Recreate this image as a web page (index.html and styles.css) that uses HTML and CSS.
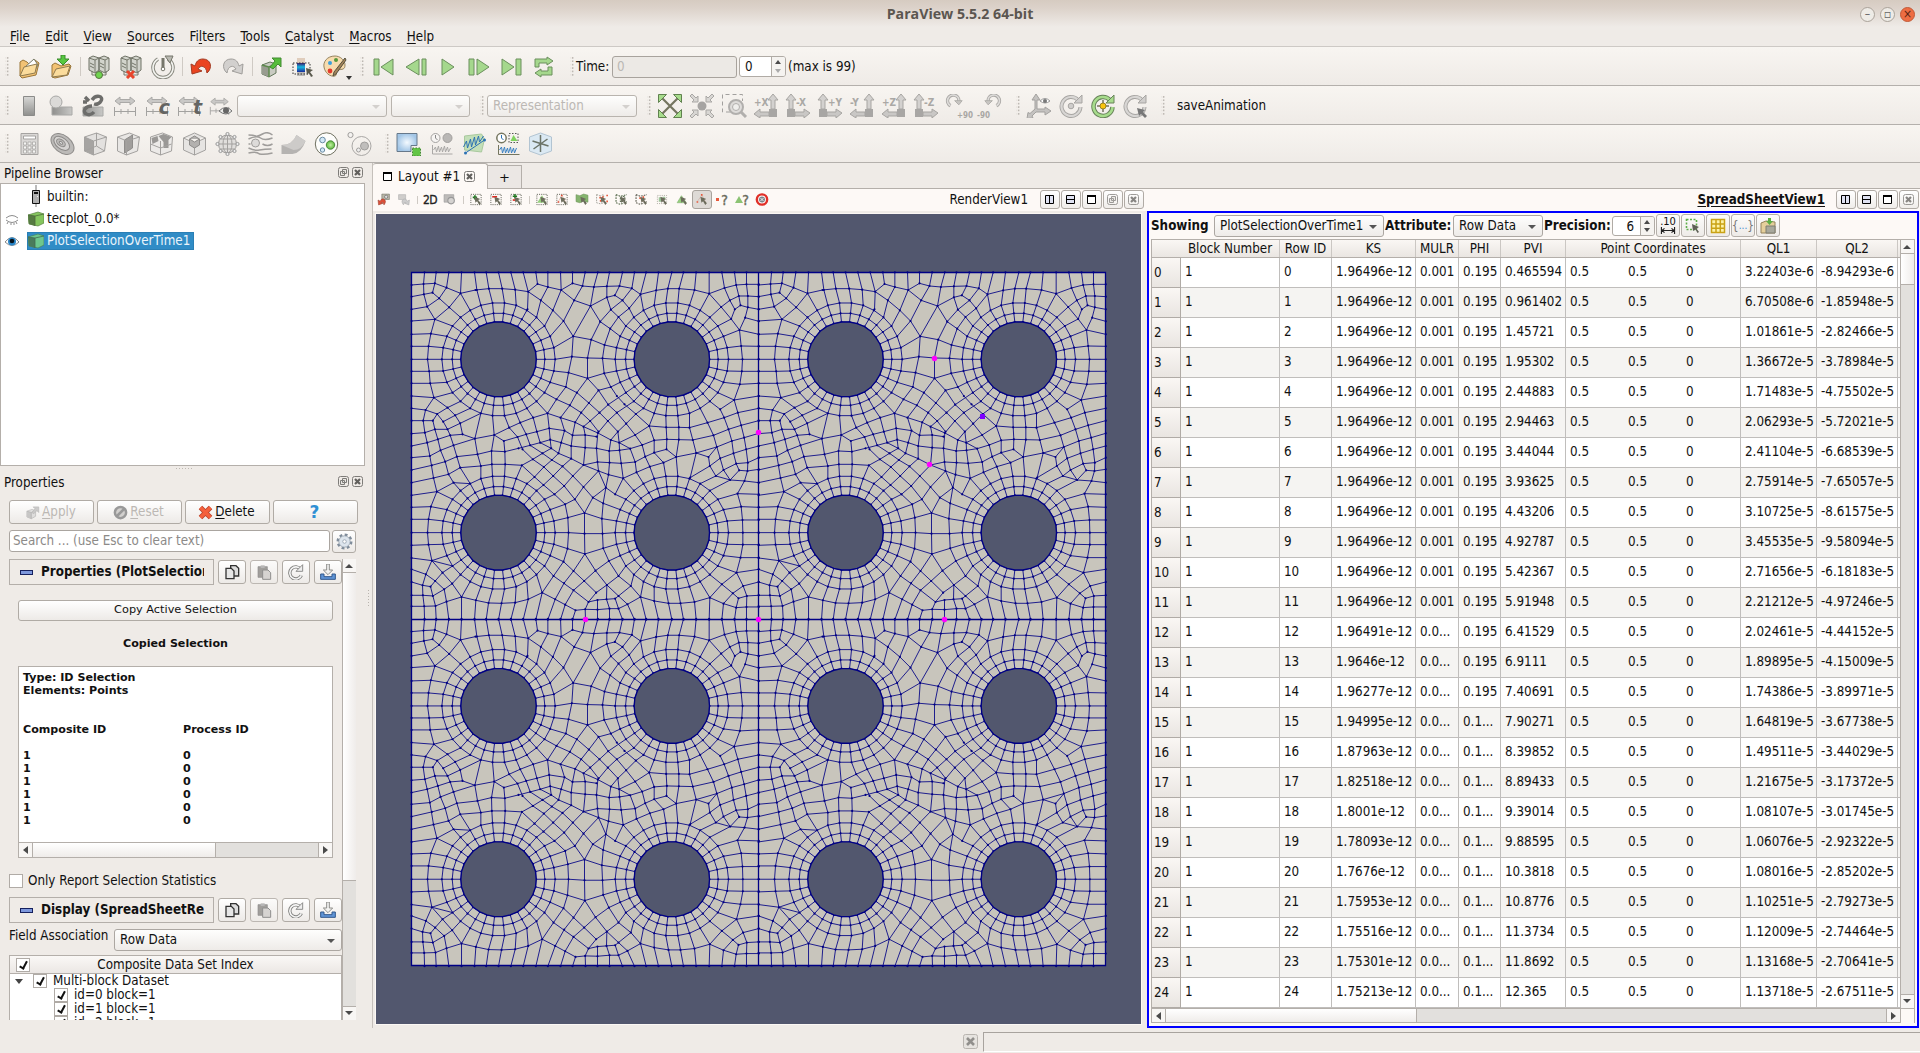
FILE: index.html
```html
<!DOCTYPE html>
<html lang="en">
<head>
<meta charset="utf-8">
<title>ParaView 5.5.2 64-bit</title>
<link rel="stylesheet" href="styles.css">
</head>
<body>
<svg class="sheet" width="0" height="0">
<defs>
<linearGradient id="gr" x1="0" y1="0" x2="0" y2="1"><stop offset="0" stop-color="#d8d8d6"/><stop offset="1" stop-color="#8f8f8d"/></linearGradient>
<linearGradient id="grh" x1="0" y1="0" x2="1" y2="0"><stop offset="0" stop-color="#8f8f8d"/><stop offset="1" stop-color="#c8c8c6"/></linearGradient>
<linearGradient id="rb" x1="0" y1="0" x2="0" y2="1"><stop offset="0" stop-color="#3a1a70"/><stop offset=".45" stop-color="#16b8e0"/><stop offset="1" stop-color="#1a2a9a"/></linearGradient>
<radialGradient id="bl"><stop offset="0" stop-color="#f4faff"/><stop offset="1" stop-color="#a3c6e6"/></radialGradient>
<radialGradient id="gn"><stop offset="0" stop-color="#c4f0a4"/><stop offset="1" stop-color="#5cb83c"/></radialGradient>
</defs>
<symbol id="open" viewBox="0 0 24 24"><path d="M3 21V7l3-2 4 2 2 2 6-4 4 3-3 12-14 3z" fill="#f2c274" stroke="#9a7638"/><path d="M8 12l9-8 4 6-3 5z" fill="#fff" stroke="#777a66"/><path d="M3 21l4-9 13-3-2 9z" fill="#fbdc9c" stroke="#8f7b50"/></symbol>
<symbol id="openr" viewBox="0 0 24 24"><path d="M3 22V10l3-2 4 2 2 1 8-2 2 2-3 9-13 3z" fill="#f2c274" stroke="#9a7638"/><path d="M3 22l4-8 14-3-3 9z" fill="#fbdc9c" stroke="#8f7b50"/><path d="M12 0h4v4h4l-6 6-6-6h4z" fill="#57c840" stroke="#3a8a2c"/></symbol>
<symbol id="server" viewBox="0 0 24 24"><path d="M2 3l4-2 6 2v12l-4 3-6-3zM12 3l5-2 5 2v12l-4 3-6-3z" fill="#d2d4cc" stroke="#6f7266"/><path d="M2 3l6 2 4-2M8 5v12M12 3l6 2 4-2M18 5v12M3 8l4 2M3 11l4 2M13 8l4 2M13 11l4 2M5 16v4h14v-4" fill="none" stroke="#74776a"/></symbol>
<symbol id="connect" viewBox="0 0 24 24"><use href="#server"/><circle cx="12" cy="20" r="3.5" fill="#6fd44f" stroke="#55713f"/></symbol>
<symbol id="disconnect" viewBox="0 0 24 24"><use href="#server"/><path d="M8 16l7 7m0-7l-7 7" stroke="#e8452c" stroke-width="3"/></symbol>
<symbol id="timer" viewBox="0 0 24 24"><path d="M17 4A10 10 0 1 1 7 4" fill="none" stroke="#8a8a80" stroke-width="3.6"/><path d="M17 4A10 10 0 1 1 7 4" fill="none" stroke="#f4f4f0" stroke-width="1.6"/><path d="M14 1h8l-3 7z" fill="#b9b9b1" stroke="#77776c"/><path d="M12 3v11" stroke="#77776c" stroke-width="3"/><circle cx="12" cy="14" r="1.8" fill="#fff" stroke="#77776c"/></symbol>
<symbol id="undo" viewBox="0 0 24 24"><path d="M2 9l1 10 10-3-4-2c2-4 8-4 9 4 6-5 4-14-4-14-5 0-7 3-8 7z" fill="#ea4420" stroke="#a33a22"/></symbol>
<symbol id="redo" viewBox="0 0 24 24"><path d="M22 9l-1 10-10-3 4-2C13 10 7 10 6 18 0 13 2 4 10 4c5 0 7 3 8 7z" fill="#d2d0ce" stroke="#a09e9b"/></symbol>
<symbol id="extract" viewBox="0 0 24 24"><path d="M3 10l8-3 6 2v9l-7 4-7-3z" fill="#c9cbc2" stroke="#62765a"/><path d="M3 10l7 2v10l-7-3z" fill="#989c90"/><path d="M3 10l7 2v10M10 12l7-3" fill="none" stroke="#5d8a4c" stroke-width="1.500"/><path d="M11 12l5-6-3-3h9v9l-3-3-5 5z" fill="#56bd3b" stroke="#438a33"/></symbol>
<symbol id="colors" viewBox="0 0 24 24"><path d="M6 3h8v5H6z" fill="#e0cdbc"/><path d="M6 8h8v9H6z" fill="url(#rb)"/><path d="M6 17h8v4H6z" fill="#bab8b5"/><path d="M2 8h17v11H2z" fill="none" stroke="#333" stroke-dasharray="1.5 1.5"/><path d="M15 13l7 2-3 2 3 4-2 1-2-4-2 2z" fill="#58584c"/></symbol>
<symbol id="palette" viewBox="0 0 24 24"><path d="M12 1C4 1 0 7 1 12c1 6 6 10 11 9 3-1 0-5 3-6 4-1 7 0 7-5 0-5-5-9-10-9z" fill="#f7dcae" stroke="#95835f"/><circle cx="7" cy="8" r="2" fill="#3ba0dc"/><circle cx="13" cy="5" r="2" fill="#56993c"/><circle cx="7" cy="16" r="2.4" fill="#e23a2c"/><path d="M22 3L11 17l-1 4 3-2L23 5z" fill="#a4855b" stroke="#55503e"/></symbol>
<symbol id="first" viewBox="0 0 24 24"><path d="M2 4h5v16H2zM21 4v16L9 12z" fill="#a5d88d" stroke="#6a8f5c"/></symbol>
<symbol id="prev" viewBox="0 0 24 24"><path d="M18 4h4v16h-4zM15 4v16L2 12z" fill="#a5d88d" stroke="#6a8f5c"/></symbol>
<symbol id="play" viewBox="0 0 24 24"><path d="M6 4l12 8-12 8z" fill="#a5d88d" stroke="#6a8f5c"/></symbol>
<symbol id="next" viewBox="0 0 24 24"><path d="M1 4h5v16H1zM9 4v16l12-8z" fill="#a5d88d" stroke="#6a8f5c"/></symbol>
<symbol id="last" viewBox="0 0 24 24"><path d="M16 4h5v16h-5zM2 4v16l12-8z" fill="#a5d88d" stroke="#6a8f5c"/></symbol>
<symbol id="loop" viewBox="0 0 24 24"><path d="M3 12V4h12V2l6 4-6 4V8H7v4zM20 12v8H9v2l-6-4 6-4v2h7v-4z" fill="#a5d88d" stroke="#6a8f5c"/></symbol>
<symbol id="bar" viewBox="0 0 24 24"><path d="M6.500 2.500h11v19h-11z" fill="url(#gr)" stroke="#8b8b89"/></symbol>
<symbol id="shapes" viewBox="0 0 24 24"><path d="M3 13h20v8H3z" fill="url(#grh)" stroke="#a8a8a6"/><circle cx="7" cy="8" r="6" fill="#dbdad8" stroke="#a8a8a6"/></symbol>
<symbol id="link" viewBox="0 0 24 24"><path d="M2 13h20v9H2z" fill="url(#grh)" stroke="#a8a8a6"/><g fill="none" stroke="#6d6d6b" stroke-width="3.400"><path d="M11 6c4-6 12-4 9 1-1 2-4 4-7 3M13 18c-4 5-12 2-9-3 2-3 5-3 7-3M4 3l4 4M2 8h4"/></g></symbol>
<symbol id="range" viewBox="0 0 24 24"><path d="M2 7l5-4v2.500h10V3l5 4-5 4V8.500H7V11z" fill="#c9c8c6" stroke="#aaa9a7"/><path d="M1.500 13v9M22.500 13v9M1.500 17.500h21M8 15v5M15 15v5" stroke="#a3a2a0"/></symbol>
<symbol id="arrow" viewBox="0 0 24 24"><path d="M9 7l11 4-4 2 5 6-3 3-4-7-3 3z" fill="#6c6c5c"/></symbol>
<symbol id="eyeg" viewBox="0 0 24 24"><path d="M10 17q7-7 13 0-6 6-13 0z" fill="#ececea" stroke="#767676"/><circle cx="17" cy="16.500" r="3" fill="#666"/></symbol>
<symbol id="reset" viewBox="0 0 24 24"><path d="M4 4l16 16M20 4L4 20" stroke="#74745f" stroke-width="2.200"/><g fill="#a7dc8c" stroke="#60814f"><path d="M.5.5h8l-8 8zM23.500.5v8l-8-8zM.5 23.500v-8l8 8zM23.500 23.500h-8l8-8z"/></g></symbol>
<symbol id="zoomto" viewBox="0 0 24 24"><g fill="#d8d6d3" stroke="#aaa8a5"><path d="M8 8H2l2-2-4-4 2-2 4 4 2-2zM16 8V2l2 2 4-4 2 2-4 4 2 2zM8 16v6l-2-2-4 4-2-2 4-4-2-2zM16 16h6l-2 2 4 4-2 2-4-4-2 2z"/></g><circle cx="12" cy="12" r="4.500" fill="#a6a4a2"/></symbol>
<symbol id="zoombox" viewBox="0 0 24 24"><path d="M8 18H.5V.5h20V7" fill="none" stroke="#a2a09e" stroke-dasharray="4 3"/><circle cx="14" cy="13" r="7" fill="#dedcda" stroke="#b1afad" stroke-width="2"/><circle cx="14" cy="13" r="3.500" fill="#efeeec" stroke="#b1afad"/><path d="M19 18l5 5" stroke="#b1afad" stroke-width="3"/></symbol>
<symbol id="axL" viewBox="0 0 24 24"><path d="M17 15V6h-3l5-6 5 6h-3v9z" fill="#d3d1cf" stroke="#a7a5a2"/><path d="M15 22H6v2l-6-4 6-5v3h9z" fill="#c9c7c5" stroke="#a7a5a2"/><path d="M15 15h8v8h-8z" fill="#a8a6a4"/></symbol>
<symbol id="axR" viewBox="0 0 24 24"><path d="M3 15V6H0l5-6 5 6H7v9z" fill="#d3d1cf" stroke="#a7a5a2"/><path d="M9 22h9v2l6-5-6-4v3H9z" fill="#c9c7c5" stroke="#a7a5a2"/><path d="M1 15h8v8H1z" fill="#a8a6a4"/></symbol>
<symbol id="rot" viewBox="0 0 24 24"><path d="M6 14A6.800 6.800 0 1 1 16 9" fill="none" stroke="#a9a7a4" stroke-width="4"/><path d="M6 14A6.800 6.800 0 1 1 16 9" fill="none" stroke="#dddbd9" stroke-width="2"/><path d="M11 8h9l-4 5z" fill="#c8c6c3" stroke="#a9a7a4"/></symbol>
<symbol id="axes" viewBox="0 0 24 24"><path d="M8 15V6H5l4-6 4 6h-3v9l8 0v-2l6 4-6 4v-3H9l-4 4 1 2-6 .5 1-6 2 1z" fill="#c4c2c0" stroke="#a3a19f"/><path d="M13 7q5-5 10 0-5 4-10 0z" fill="#fff" stroke="#999"/><circle cx="18" cy="7" r="2" fill="#777"/></symbol>
<symbol id="circ" viewBox="0 0 24 24"><path d="M19 6A9.500 9.500 0 1 0 21.500 13" fill="none" stroke="#a7a5a2" stroke-width="4"/><path d="M19 6A9.500 9.500 0 1 0 21.500 13" fill="none" stroke="#d8d6d4" stroke-width="2.200"/><path d="M23 1v8h-8z" fill="#d0cecc" stroke="#a7a5a2"/></symbol>
<symbol id="circd" viewBox="0 0 24 24"><use href="#circ"/><circle cx="12" cy="12" r="2.800" fill="#cfcdcb" stroke="#a7a5a2"/></symbol>
<symbol id="circg" viewBox="0 0 24 24"><path d="M19 6A9.500 9.500 0 1 0 21.500 13" fill="none" stroke="#68835a" stroke-width="4.500"/><path d="M19 6A9.500 9.500 0 1 0 21.500 13" fill="none" stroke="#a7dc8c" stroke-width="2.600"/><path d="M23 1v8h-8z" fill="#a7dc8c" stroke="#68835a"/><path d="M12 6v12M6 12h12" stroke="#74745f" stroke-width="1.500"/><circle cx="12" cy="12" r="3" fill="#fac40e" stroke="#9a8424"/></symbol>
<symbol id="circa" viewBox="0 0 24 24"><use href="#circ"/><path d="M14 14l8 2-2 2 4 4-2 2-4-4-2 2z" fill="#777"/></symbol>
<symbol id="calc" viewBox="0 0 24 24"><path d="M3.500 1.500h17v21h-17z" fill="#dad8d6" stroke="#a5a3a1"/><path d="M6 4h12v3H6z" fill="#fff" stroke="#a5a3a1"/><path d="M6 10h3v3H6zM10.500 10h3v3h-3zM15 10h3v3h-3zM6 14h3v3H6zM10.500 14h3v3h-3zM15 14h3v3h-3zM6 18h3v3H6zM10.500 18h3v3h-3zM15 18h3v3h-3z" fill="#f5f5f3" stroke="#aaa8a6" stroke-width=".8"/></symbol>
<symbol id="contour" viewBox="0 0 24 24"><g fill="#bcbab8" stroke="#8c8a88" transform="rotate(38 12 12)"><ellipse cx="12" cy="12" rx="13" ry="8.500"/><ellipse cx="11" cy="12" rx="9" ry="5.500" fill="#d6d4d2"/><ellipse cx="10" cy="12" rx="5" ry="3"/><ellipse cx="10" cy="12" rx="2" ry="1" fill="#eee"/></g></symbol>
<symbol id="cubeg" viewBox="0 0 24 24"><path d="M1 5l12-4 10 4-2 14-11 4-9-4z" fill="#e3e1df" stroke="#a3a19f"/><path d="M1 5l9 4v14l-9-4z" fill="#a6a4a2"/><path d="M1 5l9 4 13-4M10 9v14M13 1v13M13 14L1 19M13 14l8 5" fill="none" stroke="#a3a19f"/></symbol>
<symbol id="slice" viewBox="0 0 24 24"><path d="M1 5l12-4 10 4-2 14-11 4-9-4z" fill="#e8e6e4" stroke="#a3a19f"/><path d="M8 8l8-5v13l-8 5z" fill="#a09e9c" stroke="#8f8d8b"/><path d="M1 5l9 4 13-4M10 9v14" fill="none" stroke="#a3a19f"/></symbol>
<symbol id="thresh" viewBox="0 0 24 24"><path d="M1 5l12-4 10 4-1 14-11 4-10-4z" fill="#eceae8" stroke="#a3a19f"/><path d="M2 6l6-2 1 5-6 3zM9 4l5-2 8 3-3 3v8h-5v-6z" fill="#9a9896"/><path d="M1 12l10 4 11-4M11 9v14" fill="none" stroke="#a3a19f"/></symbol>
<symbol id="subset" viewBox="0 0 24 24"><path d="M1 6l11-5 11 5v12l-11 5L1 18zM1 6l11 5 11-5M12 11v12" fill="#e6e4e2" stroke="#a3a19f"/><path d="M7 7l5-3 5 3v6l-5 3-5-3zM7 7l5 3 5-3" fill="#b3b1af" stroke="#8d8b89"/></symbol>
<symbol id="glyph" viewBox="0 0 24 24"><circle cx="12" cy="12" r="9" fill="#e0dedc" stroke="#9d9b99"/><path d="M3 12h18M12 3v18M5 7h14M5 17h14" fill="none" stroke="#a3a19f"/><ellipse cx="12" cy="12" rx="4.500" ry="9" fill="none" stroke="#a3a19f"/><g fill="#eee" stroke="#999"><circle cx="12" cy="2" r="1.600"/><circle cx="12" cy="22" r="1.600"/><circle cx="2" cy="12" r="1.600"/><circle cx="22" cy="12" r="1.600"/><circle cx="5" cy="5" r="1.600"/><circle cx="19" cy="5" r="1.600"/><circle cx="5" cy="19" r="1.600"/><circle cx="19" cy="19" r="1.600"/></g></symbol>
<symbol id="stream" viewBox="0 0 24 24"><path d="M0 3q5 0 7 1t7-2 10 1M0 7q8-4 12-1t12 0M0 12h2M14 12q5 3 10 0M0 16q6 3 11 2t12-1M0 21q8-2 11 1 5 1 13-1" fill="none" stroke="#9f9d9b" stroke-width="1.500"/><circle cx="7" cy="11" r="4" fill="#dddbd9" stroke="#9f9d9b"/></symbol>
<symbol id="warp" viewBox="0 0 24 24"><path d="M0 13q11 0 15-10l9 6q-4 12-13 13H0z" fill="#b5b3b1"/><path d="M0 13q11 0 15-10l9 6q-4 9-12 9z" fill="#cdcbc9"/></symbol>
<symbol id="group" viewBox="0 0 24 24"><circle cx="12" cy="12" r="11.200" fill="#fdfdfb" stroke="#6f7060"/><circle cx="8" cy="8" r="2.800" fill="#d3e8f6" stroke="#6a8ca4"/><circle cx="16" cy="13" r="4.200" fill="url(#gn)" stroke="#4d8a3c"/><circle cx="8" cy="18" r="2.200" fill="#d3e8f6" stroke="#6a8ca4"/></symbol>
<symbol id="level" viewBox="0 0 24 24"><circle cx="14" cy="14" r="9.500" fill="none" stroke="#a9a7a5"/><circle cx="3" cy="3" r="2.600" fill="#f4f2f0" stroke="#a09e9c"/><circle cx="17" cy="14" r="4" fill="#c0bebc" stroke="#a09e9c"/><circle cx="11" cy="18" r="2" fill="#eee" stroke="#a09e9c"/></symbol>
<symbol id="selx" viewBox="0 0 24 24"><path d="M.5 1.500h20v12h-6v6H.5z" fill="url(#bl)" stroke="#66788a"/><path d="M16 16h8v8h-8z" fill="#62c545" stroke="#47823a" stroke-dasharray="1.500 1.500"/></symbol>
<symbol id="ptime" viewBox="0 0 24 24"><circle cx="6" cy="6" r="4.500" fill="#f7f5f3" stroke="#a3a19f"/><path d="M6 3v3l2 2" fill="none" stroke="#888"/><circle cx="18" cy="6" r="4.500" fill="#b9b7b5" stroke="#a3a19f"/><path d="M3 13v9h20M4 18l2-3 1 5 2-6 1 6 2-5 1 5 2-6 1 6 2-5 1 5 2-4" fill="none" stroke="#aaa8a6"/></symbol>
<symbol id="pline" viewBox="0 0 24 24"><path d="M2 4l17-2 3 5-3 13-17-2z" fill="#c3dfb8" stroke="#a9c99e"/><path d="M3 21L22 8M1 15l3-6 1 7 3-9 1 8 3-10 1 8 3-9 1 6 4-6" fill="none" stroke="#2c72b4"/><circle cx="3" cy="21" r="1.500" fill="#2c72b4"/><circle cx="22" cy="8" r="1.500" fill="#2c72b4"/></symbol>
<symbol id="psel" viewBox="0 0 24 24"><circle cx="6" cy="6" r="4.700" fill="#fff" stroke="#74755f" stroke-width="1.500"/><path d="M6 3v3l2 2" fill="none" stroke="#2c72b4"/><path d="M13.500 1.500h9v9h-9z" fill="none" stroke="#555" stroke-dasharray="1.500 1.500"/><path d="M18 3l4 6h-7z" fill="#7fd25f"/><path d="M3 13v9.500h21" fill="none" stroke="#74755f"/><path d="M4 18l2-3 1 6 2-6 1 6 2-5 1 5 2-6 1 6 2-5 1 5 2-5" fill="none" stroke="#3d83c4"/></symbol>
<symbol id="probe" viewBox="0 0 24 24"><path d="M1 5l11-4 11 4v14l-11 4L1 19z" fill="#dbe9f3" stroke="#b2c4d2"/><path d="M12 3v17M4 9l16 5M19 7L5 17" stroke="#6c7468" stroke-width="1.500"/></symbol>
<symbol id="sel" viewBox="0 0 24 24"><path d="M2.500 2.500h19v19h-19z" fill="none" stroke="#55564a" stroke-width="1.600" stroke-dasharray="2 2"/></symbol>
<symbol id="float" viewBox="0 0 12 12"><rect x=".5" y=".5" width="10" height="10" rx="2" fill="none" stroke="#7e7c79"/><path d="M4.500 2.500h4v4h-4zM2.500 4.500h4v4h-4z" fill="#e8e6e2" stroke="#7e7c79"/></symbol>
<symbol id="close" viewBox="0 0 12 12"><rect x=".5" y=".5" width="10" height="10" rx="2" fill="none" stroke="#7e7c79"/><path d="M3 3l5 5m0-5L3 8" stroke="#62605d" stroke-width="2.200"/></symbol>
<symbol id="splith" viewBox="0 0 12 12"><path d="M1.500 1.500h8v8h-8z" fill="#dfe2f2" stroke="#000"/><path d="M5.500 1v9" stroke="#000"/></symbol>
<symbol id="splitv" viewBox="0 0 12 12"><path d="M1.500 1.500h8v8h-8z" fill="#dfe2f2" stroke="#000"/><path d="M1 5.500h9" stroke="#000"/></symbol>
<symbol id="max" viewBox="0 0 12 12"><path d="M1.500 1.500h8v8h-8z" fill="#fff" stroke="#000"/><path d="M1 2h9" stroke="#000" stroke-width="2"/></symbol>
<symbol id="cube" viewBox="0 0 16 16"><path d="M0 4l10-3 6 2v9l-6 3-9-2z" fill="#85c55e" stroke="#58803f" stroke-width=".7"/><path d="M0 4l7 1v10l-6-2z" fill="#567a42"/><path d="M0 4l7 1 9-2M7 5v10" fill="none" stroke="#4b6b3a" stroke-width=".8"/></symbol>
<symbol id="copy" viewBox="0 0 24 24"><path d="M10 2.500h8l4 4V18H10z" fill="#ddd" stroke="#333" stroke-width="2"/><path d="M3 6.500h8l4 4V22H3z" fill="#e6e6e6" stroke="#333" stroke-width="2"/></symbol>
<symbol id="paste" viewBox="0 0 24 24"><path d="M3 4h14v16H3z" fill="#8d8b89" stroke="#777"/><path d="M10 9h8l4 4v10H10z" fill="#d0cecc" stroke="#777" stroke-width="1.500"/><path d="M7 2h6v4H7z" fill="#aaa"/></symbol>
<symbol id="refresh" viewBox="0 0 24 24"><path d="M19 8A9 9 0 1 0 20 17" fill="none" stroke="#80807e" stroke-width="5"/><path d="M19 8A9 9 0 1 0 20 17" fill="none" stroke="#f5f5f5" stroke-width="2.400"/><path d="M22 1v10H12z" fill="#eee" stroke="#80807e" stroke-width="1.300"/></symbol>
<symbol id="save" viewBox="0 0 24 24"><path d="M1 15h5v4h12v-4h5v8H1z" fill="#5f94d6" stroke="#32588c" stroke-width="1.500"/><path d="M10 0h4v9h5l-7 7-7-7h5z" fill="#f3f3f1" stroke="#80807c" stroke-width="1.300"/></symbol>
</svg>

<header class="titlebar"><span class="title">ParaView 5.5.2 64-bit</span><span class="wm"><i>–</i><i>▫</i><i class="x">×</i></span></header>
<nav class="menubar"><span><u>F</u>ile</span><span><u>E</u>dit</span><span><u>V</u>iew</span><span><u>S</u>ources</span><span>Fi<u>l</u>ters</span><span><u>T</u>ools</span><span><u>C</u>atalyst</span><span><u>M</u>acros</span><span><u>H</u>elp</span></nav>

<div class="toolbar">
<i class="grip"></i><svg><use href="#open"/></svg><svg><use href="#openr"/></svg><i class="sep"></i><svg><use href="#connect"/></svg><svg><use href="#disconnect"/></svg><svg><use href="#timer"/></svg><i class="sep"></i><svg><use href="#undo"/></svg><svg><use href="#redo"/></svg><i class="sep"></i><svg><use href="#extract"/></svg><svg><use href="#colors"/></svg><span class="slot"><svg><use href="#palette"/></svg><i class="drop"></i></span><i class="grip g2"></i><svg><use href="#first"/></svg><svg><use href="#prev"/></svg><svg><use href="#play"/></svg><svg><use href="#next"/></svg><svg><use href="#last"/></svg><svg><use href="#loop"/></svg><i class="grip g3"></i><span class="time">Time:</span><span class="field off">0</span><span class="spin big"><b>0</b><em></em></span><span>(max is 99)</span>
</div>
<div class="toolbar">
<i class="grip"></i><svg><use href="#bar"/></svg><svg><use href="#shapes"/></svg><svg><use href="#link"/></svg><svg><use href="#range"/></svg><span class="slot"><svg><use href="#range"/></svg><b class="over">c</b></span><span class="slot"><svg><use href="#range"/></svg><b class="over">t</b></span><svg viewBox="0 0 24 24"><use href="#range" width="21" height="24"/><use href="#eyeg"/></svg><span class="combo dis c1"></span><span class="combo dis c2"></span><i class="grip g4"></i><span class="combo dis c3">Representation</span><i class="grip g5"></i><svg><use href="#reset"/></svg><svg><use href="#zoomto"/></svg><svg><use href="#zoombox"/></svg><span class="slot"><svg><use href="#axL"/></svg><b class="ax">+X</b></span><span class="slot"><svg><use href="#axR"/></svg><b class="ax r">-X</b></span><span class="slot"><svg><use href="#axR"/></svg><b class="ax r">+Y</b></span><span class="slot"><svg><use href="#axL"/></svg><b class="ax">-Y</b></span><span class="slot"><svg><use href="#axL"/></svg><b class="ax">+Z</b></span><span class="slot"><svg><use href="#axR"/></svg><b class="ax r">-Z</b></span><span class="slot"><svg class="turn"><use href="#rot"/></svg><b class="deg">+90</b></span><span class="slot"><svg class="turn flip"><use href="#rot"/></svg><b class="deg l">-90</b></span><i class="grip g6"></i><svg><use href="#axes"/></svg><svg><use href="#circd"/></svg><svg><use href="#circg"/></svg><svg><use href="#circa"/></svg><i class="grip g7"></i><span class="macro">saveAnimation</span>
</div>
<div class="toolbar wide">
<i class="grip"></i><svg><use href="#calc"/></svg><svg><use href="#contour"/></svg><svg><use href="#cubeg"/></svg><svg><use href="#slice"/></svg><svg><use href="#thresh"/></svg><svg><use href="#subset"/></svg><svg><use href="#glyph"/></svg><svg><use href="#stream"/></svg><svg><use href="#warp"/></svg><svg><use href="#group"/></svg><svg><use href="#level"/></svg><i class="grip g8"></i><svg><use href="#selx"/></svg><svg><use href="#ptime"/></svg><svg><use href="#pline"/></svg><svg><use href="#psel"/></svg><svg><use href="#probe"/></svg>
</div>

<main class="main">
<aside class="dock">
<div class="dtitle">Pipeline Browser<span><svg><use href="#float"/></svg><svg><use href="#close"/></svg></span></div>
<div class="pipeline">
<div class="prow"><i class="eye"></i><i class="node"><svg viewBox="0 0 16 16"><path d="M8-4v22" stroke="#777"/><path d="M4.500 1.500h7v13h-7z" fill="#b0b0b0" stroke="#111"/><path d="M6 3h4v2H6z" fill="#111"/><path d="M9 7h1v1H9z" fill="#eee"/></svg></i><span>builtin:</span></div>
<div class="prow"><i class="eye"><svg viewBox="0 0 16 16"><path d="M2 7q6-5 12 0M2 9q6 5 12 0M4 11l-1 2M7 12v2M10 12v2M12 11l1 2" fill="none" stroke="#8d8d8d"/></svg></i><i class="node"><svg><use href="#cube"/></svg></i><span>tecplot_0.0*</span></div>
<div class="prow"><i class="eye"><svg viewBox="0 0 16 16"><path d="M1 9q7-9 14 0-7 7-14 0z" fill="#fff" stroke="#8a8a8a"/><circle cx="8" cy="8.500" r="4" fill="#2a86c8"/><circle cx="8" cy="8" r="2.300" fill="#06131c"/></svg></i><div class="picked"><i class="node"><svg class="blue"><use href="#cube"/></svg></i><span>PlotSelectionOverTime1</span></div></div>
</div>
<div class="dots"></div>
<div class="dtitle">Properties<span><svg><use href="#float"/></svg><svg><use href="#close"/></svg></span></div>
<div class="btns"><span class="btn dis"><svg class="fade" viewBox="0 0 24 24"><use href="#extract"/></svg><span><u>A</u>pply</span></span><span class="btn dis"><svg viewBox="0 0 24 24"><circle cx="12" cy="12" r="9" fill="#d2d0ce" stroke="#999" stroke-width="4"/><path d="M6 18L18 6" stroke="#999" stroke-width="4"/></svg><span><u>R</u>eset</span></span><span class="btn"><svg viewBox="0 0 24 24"><path d="M4 4l16 16M20 4L4 20" stroke="#b8442c" stroke-width="8"/><path d="M4 4l16 16M20 4L4 20" stroke="#f4603c" stroke-width="5.500"/></svg><span><u>D</u>elete</span></span><span class="btn help">?</span></div>
<div class="search"><span>Search ... (use Esc to clear text)</span><b class="btn gear"><svg viewBox="0 0 24 24"><circle cx="12" cy="12" r="9.500" fill="none" stroke="#7f8c9a" stroke-width="3.500" stroke-dasharray="4 3.460"/><circle cx="12" cy="12" r="8" fill="#dde5ed" stroke="#8996a4"/><circle cx="12" cy="12" r="2.500" fill="#fff" stroke="#8996a4"/></svg></b></div>
<div class="scrollarea">
<div class="props">
<div class="phead"><div class="pbox"><i></i><span>Properties (PlotSelectionOverTime1)</span></div><b class="btn"><svg><use href="#copy"/></svg></b><b class="btn off2"><svg><use href="#paste"/></svg></b><b class="btn"><svg><use href="#refresh"/></svg></b><b class="btn"><svg><use href="#save"/></svg></b></div>
<div class="btn copysel">Copy Active Selection</div>
<div class="copied">Copied Selection</div>
<div class="selbox"><div class="seltext"><p>Type: ID Selection</p><p>Elements: Points</p><p></p><p></p><p><span>Composite ID</span>Process ID</p><p></p><p><span>1</span>0</p><p><span>1</span>0</p><p><span>1</span>0</p><p><span>1</span>0</p><p><span>1</span>0</p><p><span>1</span>0</p></div><div class="hscroll"><i class="al"></i><i class="thumb"></i><i class="trk"></i><i class="ar"></i></div></div>
<div class="only"><i class="cb"></i>Only Report Selection Statistics</div>
<div class="phead"><div class="pbox"><i></i><span>Display (SpreadSheetRe</span></div><b class="btn"><svg><use href="#copy"/></svg></b><b class="btn off2"><svg><use href="#paste"/></svg></b><b class="btn"><svg><use href="#refresh"/></svg></b><b class="btn"><svg><use href="#save"/></svg></b></div>
<div class="assoc"><span>Field Association</span><span class="combo">Row Data</span></div>
<div class="tree"><div class="thead"><i class="cb on"></i><span>Composite Data Set Index</span></div><div class="trow t0"><i class="tri"></i><i class="cb on"></i>Multi-block Dataset</div><div class="trow"><i class="cb on"></i>id=0 block=1</div><div class="trow"><i class="cb on"></i>id=1 block=1</div><div class="trow"><i class="cb on"></i>id=2 block=1</div></div>
</div>
<div class="vscroll v1"><i class="au"></i><i class="thumb"></i><i class="trk"></i><i class="ad"></i></div>
</div>
</aside>
<div class="split"></div>
<section class="work">
<div class="tabs"><span class="tab on"><svg class="s12"><use href="#max"/></svg>Layout #1<svg class="s12"><use href="#close"/></svg></span><span class="tab add">+</span><span class="rest"></span></div>
<div class="views">
<div class="view left">
<div class="vbar">
<svg viewBox="0 0 24 24"><path d="M8 2h14v10H8z" fill="#b9b7a8" stroke="#6b6b5e"/><circle cx="16" cy="7" r="3" fill="#ddd" stroke="#555"/><path d="M1 13l1 9 8-3-3-1q4-3 5 4 6-8-1-11-4-1-6 4z" fill="#dd4f38" stroke="#96402e"/></svg><svg viewBox="0 0 24 24"><path d="M2 3h13v9H2z" fill="#cfcdcb" stroke="#aaa"/><path d="M22 13l-1 9-8-3 3-1q-4-3-5 4-6-8 1-11 4-1 6 4z" fill="#ccc" stroke="#aaa"/></svg><i class="sep"></i><b class="twod">2D</b><svg viewBox="0 0 24 24"><path d="M1 3h18v14H1z" fill="#bdbbb9" stroke="#999"/><circle cx="14" cy="14" r="6" fill="#d5d3d1" stroke="#999" stroke-width="2"/></svg><i class="sep"></i>
<svg viewBox="0 0 24 24"><use href="#sel"/><path d="M10 4v8M6 8h8" stroke="#197a1c" stroke-width="3"/><use href="#arrow"/></svg><svg viewBox="0 0 24 24"><use href="#sel"/><path d="M5 7h9" stroke="#e02a20" stroke-width="3"/><use href="#arrow"/></svg><svg viewBox="0 0 24 24"><use href="#sel"/><path d="M10 2v8M6 6h8" stroke="#197a1c" stroke-width="2.500"/><path d="M6 13h9" stroke="#e02a20" stroke-width="3"/><use href="#arrow"/></svg><i class="sep"></i>
<svg viewBox="0 0 24 24"><use href="#sel"/><path d="M12 4l8 14H3z" fill="#96d07e"/><use href="#arrow"/></svg><svg viewBox="0 0 24 24"><use href="#sel"/><path d="M12 4l7 14M12 4L5 16" fill="none" stroke="#d99a8a"/><path d="M10 3h3v3h-3zM4 15h3v3H4z" fill="#e24b34"/><use href="#arrow"/></svg><svg viewBox="0 0 24 24"><path d="M1 3l7 2 7-3 8 2v13l-8-2-7 3-7-2z" fill="#86b56f" stroke="#6c9158"/><use href="#arrow"/></svg><svg viewBox="0 0 24 24"><path d="M2 3l7 2 6-2v15l-6 2-7-2z" fill="none" stroke="#5c5c50" stroke-dasharray="3 2"/><path d="M7 7h3v3H7zM12 6h3v3h-3zM20 3h3v3h-3zM20 14h3v3h-3zM8 13h3v3H8z" fill="#e8593c"/><use href="#arrow"/></svg><svg viewBox="0 0 24 24"><path d="M1 3l8 3 12-3M1 3v15l8 3 12-5M9 8l8-2v8l-8 3z" fill="none" stroke="#55694a" stroke-width="2" stroke-dasharray="3 2"/><use href="#arrow"/></svg><svg viewBox="0 0 24 24"><path d="M1 3l8 3 12-3M1 3v15l8 3 12-5" fill="none" stroke="#5c5c50" stroke-width="2" stroke-dasharray="3 2"/><path d="M7 8h3v3H7zM13 6h3v3h-3zM12 12h3v3h-3z" fill="#e8593c"/><use href="#arrow"/></svg><svg viewBox="0 0 24 24"><path d="M3.500 4.500h17v15h-17z" fill="none" stroke="#777869" stroke-dasharray="2 2"/><path d="M6 8h5v8H6zM13 7h5v5h-5z" fill="#9ec49a"/><use href="#arrow"/></svg><svg viewBox="0 0 24 24"><path d="M11 5l9 13H3z" fill="#96d07e" stroke="#7fae6c"/><use href="#arrow"/></svg><svg class="pressed" viewBox="0 0 24 24"><path d="M12 4l7 14M12 4L3 16" fill="none" stroke="#c9a599"/><path d="M10 2h3v3h-3zM2 15h3v3H2z" fill="#e8593c"/><use href="#arrow"/></svg><b class="q"><i></i>?</b><b class="q g"><i></i>?</b><svg viewBox="0 0 24 24"><circle cx="12" cy="12" r="9.500" fill="#fff" stroke="#e03028" stroke-width="4.500"/><circle cx="12" cy="12" r="5.500" fill="#7b8288"/><path d="M9 9l6 6m0-6l-6 6" stroke="#fff" stroke-width="1.500"/></svg>
<span class="vname">RenderView1</span><span class="vb"><svg><use href="#splith"/></svg></span><span class="vb"><svg><use href="#splitv"/></svg></span><span class="vb"><svg><use href="#max"/></svg></span><span class="vb dim"><svg><use href="#float"/></svg></span><span class="vb dim"><svg><use href="#close"/></svg></span>
</div>
<div class="render"><svg id="mesh" width="765" height="810" viewBox="376 214 765 810"></svg></div>
</div>
<div class="view right">
<div class="vbar"><span class="vname act">SpreadSheetView1</span><span class="vb"><svg><use href="#splith"/></svg></span><span class="vb"><svg><use href="#splitv"/></svg></span><span class="vb"><svg><use href="#max"/></svg></span><span class="vb dim"><svg><use href="#close"/></svg></span></div>
<div class="sheetview">
<div class="sbar"><b class="w1">Showing</b><span class="combo c4">PlotSelectionOverTime1</span><b class="w2">Attribute:</b><span class="combo c5">Row Data</span><b class="w3">Precision:</b><span class="spin"><b>6</b><em></em></span><span class="tb fix"><small>.10</small><svg viewBox="0 0 18 8"><path d="M1.500 0v8M16.500 0v8M2 4h14M5 1.500L2 4l3 2.500M13 1.500L16 4l-3 2.500" fill="none" stroke="#222" stroke-width="1.300"/></svg></span><span class="tb"><svg viewBox="0 0 16 16"><path d="M1.500 1.500h10v10h-10z" fill="none" stroke="#5fae4a" stroke-width="1.600" stroke-dasharray="2 1.500"/><path d="M7 6l7 3-2.500 1.500L14 14l-1.500 1-2-3.500L8 13z" fill="#5e6056"/></svg></span><span class="tb"><svg viewBox="0 0 16 16"><path d="M1.500 1.500h13v13h-13zM1.500 6h13M1.500 10.300h13M6 1.500v13M10.300 1.500v13" fill="#fdf3a8" stroke="#c9a216" stroke-width="1.500"/></svg></span><span class="tb br"><b>{</b><i>...</i><b>}</b></span><span class="tb"><svg viewBox="0 0 16 16"><path d="M1 5l5-2 9 1v11H1z" fill="#e5cf9c" stroke="#93825a"/><path d="M6 8h9v7H6z" fill="#a8a89c" stroke="#7d7d70"/><path d="M8 0h3v3h2L9.500 7 6 3h2z" fill="#5cae45"/></svg></span></div>
<div class="grid"><div class="gridmain"><div class="ghead"><span></span><span>Block Number</span><span>Row ID</span><span>KS</span><span>MULR</span><span>PHI</span><span>PVI</span><span>Point Coordinates</span><span>QL1</span><span>QL2</span><span></span></div><div id="rows" class="rows"></div>
<div class="hscroll h2"><i class="al"></i><i class="thumb"></i><i class="trk"></i><i class="ar"></i></div></div>
<div class="vscroll v2"><i class="au"></i><i class="thumb"></i><i class="trk"></i><i class="ad"></i><i class="corner"></i></div></div>
</div>
</div>
</div>
</section>
</main>
<footer class="status"><svg viewBox="0 0 15 15"><rect x=".5" y=".5" width="14" height="14" rx="2" fill="#e6e3df" stroke="#b9b5b0"/><path d="M4 4l7 7m0-7l-7 7" stroke="#918f8c" stroke-width="2.600"/></svg><div class="prog"></div></footer>
<script src="app.js"></script>
</body>
</html>
```
FILE: styles.css
```css
* { box-sizing: border-box; }
body { margin: 0; width: 1920px; height: 1053px; overflow: hidden; background: #efebe7; color: #111; font: 13.3px/18px "DejaVu Sans Condensed", "DejaVu Sans", sans-serif; font-stretch: condensed; display: flex; flex-direction: column; }
i, em { font-style: normal; }
p { margin: 0; }
u { text-underline-offset: 2px; }
.sheet { position: absolute; }
svg { display: block; flex: none; }
.titlebar { height: 27px; flex: none; background: linear-gradient(#d6cbc1, #dcd2ca 8px, #efebe7); position: relative; text-align: center; }
.title { font: bold 14.2px/28px "Open Sans", sans-serif; font-stretch: normal; color: #5b5650; }
.wm { position: absolute; right: 5px; top: 7px; display: flex; gap: 5px; }
.wm i { width: 15px; height: 15px; border-radius: 50%; border: 1px solid #aaa299; background: #eeebe6; font-size: 12px; line-height: 12px; color: #666; text-align: center; }
.wm .x { background: #ee6d43; border-color: #c25a38; color: #5a2412; }
.menubar { height: 20px; flex: none; display: flex; padding: 0 10px; gap: 15.200px; line-height: 20px; border-bottom: 1px solid #cdc9c5; }
.toolbar { height: 39px; flex: none; display: flex; align-items: center; padding-top: 1px; background: linear-gradient(#f8f5f1, #efebe7); border-bottom: 1px solid #b4b0ac; }
.toolbar > svg, .slot { width: 32px; height: 24px; flex: none; }
.slot svg { width: 32px; height: 24px; }
.slot { position: relative; }
.wide { height: 38px; padding-top: 0; }
.wide > svg { width: 33px; }
.grip { width: 13px; height: 20px; flex: none; padding: 0 4px 0 5px; background: radial-gradient(circle at 1px 1px, #bbb6b0 .8px, transparent 1px) 5px 0 / 3.200px 3.400px content-box; }
.g2 { margin: 0 0 0 4px; } .g3 { margin: 0 -1px 0 5px; } .g4 { margin: 0 -1px 0 5px; } .g5 { margin: 0 -1px 0 5px; } .g6 { margin: 0 -1px 0 5px; } .g7 { margin-left: 5px; }
.g8 { margin: 0 -1px 0 4px; }
.sep { width: 6px; height: 19px; flex: none; background: linear-gradient(#cfcac4, #cfcac4) 3px 0 / 1px 100% no-repeat; }
.drop { position: absolute; right: -1px; bottom: -1px; border: 3.500px solid transparent; border-top: 4px solid #333; border-bottom: 0; }
.time { width: 36px; white-space: nowrap; margin-left: -1px; }
.field { width: 125px; height: 22px; border: 1px solid #a8a39d; border-radius: 3px; padding: 0 4px; line-height: 20px; color: #bab7b3; background: #ece9e5; margin-right: 2px; }
.spin { display: flex; width: 43px; height: 20px; border: 1px solid #b0aba5; border-radius: 3px; background: #fff; overflow: hidden; }
.spin b { flex: 1; font-weight: normal; text-align: right; padding-right: 6px; line-height: 19px; }
.spin em { width: 14px; border-left: 1px solid #b0aba5; background: #f5f3f0; position: relative; }
.spin em::before, .spin em::after { content: ""; position: absolute; left: 3px; border: 3.500px solid transparent; }
.spin em::before { top: 3px; border-bottom: 4px solid #4a4a4a; border-top: 0; }
.spin em::after { bottom: 3px; border-top: 4px solid #4a4a4a; border-bottom: 0; }
.spin.big { width: 47px; height: 21px; margin-right: 2px; }
.spin.big b { text-align: left; padding-left: 5px; }
.spin.big em::after { border-top-color: #aaa; }
.over { position: absolute; right: 3px; top: 2px; font: italic bold 19px/22px "DejaVu Sans", sans-serif; color: #646462; }
.combo { height: 22px; border: 1px solid #aca7a2; border-radius: 3px; background: linear-gradient(#fefefd, #eeebe8); padding: 0 5px; line-height: 20px; position: relative; white-space: nowrap; flex: none; }
.combo::after { content: ""; position: absolute; right: 6px; top: 9px; border: 4px solid transparent; border-top: 4.500px solid #555; border-bottom: 0; }
.dis { color: #bcb8b4; }
.combo.dis { border-color: #b9b4ae; } .combo.dis::after { border-top-color: #d3d0cd; }
.c1 { width: 150px; margin-right: 4px; } .c2 { width: 79px; } .c3 { width: 150px; }
.ax { position: absolute; left: 4px; top: 3px; font: bold 10px/11px "DejaVu Sans Condensed", sans-serif; color: #aaa8a5; } .ax.r { left: 14px; }
.deg { position: absolute; right: 1px; bottom: -2px; font: bold 8px/9px "DejaVu Sans Condensed", sans-serif; color: #a9a7a4; } .deg.l { left: 3px; right: auto; }
.slot .turn { width: 27px; height: 20px; }
.flip { transform: scaleX(-1); margin-left: 4px; }
.macro { margin-left: 8px; }
.main { flex: none; height: 865px; display: flex; }
.dock { width: 366px; display: flex; flex-direction: column; }
.dtitle { height: 20px; flex: none; padding-left: 4px; line-height: 21px; display: flex; justify-content: space-between; align-items: center; }
.dtitle span { display: flex; gap: 2px; padding-right: 2px; }
.dtitle svg, .s12 { width: 12px; height: 12px; }
.pipeline { height: 283px; width: 365px; flex: none; border: 1px solid #b4afaa; background: #fff; padding-top: 2px; }
.prow { height: 22.200px; display: flex; align-items: center; }
.eye { width: 26px; padding-left: 3px; } .eye svg { width: 16px; height: 16px; }
.node { width: 19px; } .node svg { width: 16px; height: 16px; overflow: visible; margin-left: 1px; }
.prow span { padding-left: 1px; }
.picked { display: flex; align-items: center; height: 18px; background: #308cc6; outline: 1px solid #2a7fb5; outline-offset: -1px; color: #eaf4fb; padding-right: 4px; }
.blue { filter: hue-rotate(35deg) saturate(.8); }
.dots { height: 6px; width: 365px; background: repeating-linear-gradient(90deg, #bdb8b2 0 1px, transparent 1px 3px) 176px 2px / 17px 1px no-repeat; }
.btns { display: flex; gap: 3px; padding: 8px 0 0 9px; }
.btn { border: 1px solid #b0aba5; border-radius: 3px; background: linear-gradient(#fff, #edeae7); display: flex; align-items: center; justify-content: center; }
.btns .btn { width: 85px; height: 24px; gap: 2px; padding-right: 2px; }
.btns svg { width: 15px; height: 15px; } .fade { filter: grayscale(1) opacity(.5); }
.btns .help { font: bold 17px/22px "DejaVu Sans", sans-serif; color: #2e8fd4; }
.search { display: flex; gap: 2px; padding: 6px 0 0 9px; }
.search span { width: 321px; height: 22px; border: 1px solid #aaa5a0; border-radius: 3px; background: #fff; color: #8c8a88; padding: 0 3px; line-height: 20px; }
.gear { width: 24px; height: 23px; } .gear svg { width: 17px; height: 17px; }
.scrollarea { display: flex; margin: 6px 0 0 9px; height: 461px; overflow: hidden; }
.props { width: 333px; }
.phead { display: flex; gap: 4px; align-items: center; height: 26px; }
.pbox { width: 205px; height: 26px; border: 1px solid #b4afaa; display: flex; align-items: center; padding: 0 9px 0 10px; overflow: hidden; font-weight: bold; white-space: nowrap; }
.pbox span { overflow: hidden; }
.pbox i { width: 13px; height: 5px; border: 1px solid #15205e; background: #7d97dc; margin-right: 8px; flex: none; }
.phead .btn { width: 28px; height: 24px; } .phead svg { width: 16px; height: 16px; } .off2 { opacity: .8; }
.copysel { margin: 15px 0 0 9px; width: 315px; height: 21px; font: 11.300px/18px "DejaVu Sans", sans-serif; font-stretch: normal; padding-bottom: 1px; }
.copied { margin: 14px 0 13px 9px; width: 315px; text-align: center; font: bold 11.100px/18px "DejaVu Sans", sans-serif; font-stretch: normal; }
.selbox { margin-left: 9px; width: 315px; height: 192px; border: 1px solid #b4afaa; background: #fff; display: flex; flex-direction: column; }
.seltext { flex: 1; padding: 4px; font: bold 11.100px/13px "DejaVu Sans", sans-serif; font-stretch: normal; }
.seltext p { height: 13px; } .seltext span { display: inline-block; width: 160px; }
.hscroll { height: 15px; display: flex; border-top: 1px solid #b4afaa; }
.al, .ar, .au, .ad { flex: none; background: #f8f6f4; position: relative; }
.al, .ar { width: 14px; } .au, .ad { height: 14px; }
.al { border-right: 1px solid #b4afaa; } .ar { border-left: 1px solid #b4afaa; }
.au { border-bottom: 1px solid #b4afaa; } .ad { border-top: 1px solid #b4afaa; }
.al::after, .ar::after, .au::after, .ad::after { content: ""; position: absolute; left: 4px; top: 3px; border: 4px solid transparent; }
.al::after { border-right: 5px solid #4a4a4a; border-left: 0; } .ar::after { border-left: 5px solid #4a4a4a; border-right: 0; left: 4px; }
.au::after { border-bottom: 4px solid #4a4a4a; border-top: 0; left: 2px; top: 5px; } .ad::after { border-top: 4px solid #4a4a4a; border-bottom: 0; left: 2px; top: 4px; }
.hscroll .thumb { width: 183px; background: linear-gradient(#fff, #efecea); border-right: 1px solid #b4afaa; }
.trk { flex: 1; background: #e2e0dd; }
.only { display: flex; align-items: center; gap: 5px; margin-top: 14px; height: 18px; margin-bottom: 7px; }
.cb { width: 14px; height: 14px; border: 1px solid #b0aba6; background: #fff; flex: none; position: relative; }
.cb.on::after { content: ""; position: absolute; left: 4px; top: 1px; width: 3px; height: 7px; border: solid #111; border-width: 0 2px 2px 0; transform: rotate(28deg); }
.assoc { display: flex; justify-content: space-between; height: 22px; margin-top: 6px; line-height: 13px; } .assoc .combo { width: 228px; }
.tree { margin-top: 4px; height: 80px; border: 1px solid #b4afaa; background: #fff; }
.thead { height: 18px; background: linear-gradient(#faf8f6, #ebe7e4); border-bottom: 1px solid #b4afaa; display: flex; align-items: center; padding-left: 6px; } .thead span { flex: 1; text-align: center; padding-right: 20px; }
.trow { display: flex; align-items: center; gap: 6px; height: 14px; padding-left: 44px; } .t0 { padding-left: 5px; } .tri { border: 4.500px solid transparent; border-top: 5px solid #444; border-bottom: 0; margin-right: 4px; }
.vscroll { width: 14px; display: flex; flex-direction: column; border-left: 1px solid #b4afaa; }
.v1 .thumb { height: 308px; background: linear-gradient(90deg, #fff, #efecea); border-bottom: 1px solid #b4afaa; }
.split { width: 6px; background: repeating-linear-gradient(#b9b4ae 0 1px, transparent 1px 3px) 2px 427px / 1px 16px no-repeat; }
.work { width: 1548px; display: flex; flex-direction: column; border-left: 1px solid #c5c0bb; }
.tabs { height: 26px; display: flex; } .tab { border: 1px solid #b4afaa; display: flex; align-items: center; }
.tab.on { width: 115px; padding-left: 9px; gap: 4px; background: #fdf9f6; border-bottom: 0; border-left: 0; border-radius: 3px 3px 0 0; }
.add { width: 34px; margin-top: 2px; justify-content: center; background: #ebe7e4; border-left: 0; font: 13px "DejaVu Sans", sans-serif; } .rest { flex: 1; border-bottom: 1px solid #b4afaa; }
.views { display: flex; }
.view.left { width: 774px; }
.view.right { width: 773px; }
.vbar { height: 22px; background: #fdf9f6; display: flex; align-items: center; padding-bottom: 1px; }
.left .vbar { padding-left: 1px; padding-right: 2px; }
.right .vbar { justify-content: flex-end; }
.vbar > svg { width: 20px; height: 13px; }
.vbar .pressed { height: 19px; background: #dedad6; border: 1px solid #a8a39d; border-radius: 3px; padding: 2px 0; }
.vbar .sep { height: 8px; }
.twod { width: 20px; text-align: center; font-weight: normal; font-size: 12px; letter-spacing: -.5px; color: #222; -webkit-text-stroke: .3px #222; }
.q { width: 20px; display: flex; align-items: center; justify-content: center; font-size: 14px; font-weight: normal; color: #6a6b5c; -webkit-text-stroke: .4px #6a6b5c; } .q i { width: 3px; height: 3px; background: #e8593c; margin-right: 2px; } .q.g i { width: 0; height: 0; background: none; border: 4px solid transparent; border-bottom: 7px solid #8bc373; border-top: 0; margin-right: -1px; }
.vname { margin-left: auto; padding-right: 12px; } .act { font-weight: bold; text-decoration: underline; text-underline-offset: 2px; padding-right: 11px; }
.vb { width: 20px; height: 19px; border: 1px solid #b0aba5; border-radius: 3px; background: linear-gradient(#fff, #f0edea); margin-right: 1px; display: flex; align-items: center; justify-content: center; flex: none; } .vb svg { width: 12px; height: 12px; } .dim svg { opacity: .75; }
.render { margin: 3px 0 0 3px; width: 765px; height: 810px; background: #52576e; outline: 1px solid #fbf7f4; }
.mesh-line { fill: none; stroke: #000084; stroke-width: 3; stroke-opacity: .85; }
.mesh-edge { fill: none; stroke: #000084; stroke-width: 1.300; }
.mesh-node { fill: #000084; }
.sheetview { height: 817px; width: 772px; border: 2px solid #0000ff; background: #fdf9f6; padding: 0 2px 2px 2px; }
.sbar { height: 26px; display: flex; align-items: center; padding-bottom: 1px; }
.sbar > b { flex: none; white-space: nowrap; } .w1 { width: 63px; } .w2 { width: 69px; padding-left: 1px; } .w3 { width: 69px; padding-left: 1px; }
.c4 { width: 170px; } .c5 { width: 90px; } .tb { width: 24px; height: 23px; border: 1px solid #b5b0aa; border-radius: 3px; margin-left: 1px; display: flex; align-items: center; justify-content: center; flex: none; background: linear-gradient(#fdfcfb, #eeebe8); }
.tb svg { width: 16px; height: 16px; } .tb.fix { flex-direction: column; } .fix small { font-size: 11px; line-height: 10px; } .tb.fix svg { width: 18px; height: 7px; }
.br { font-size: 12px; color: #777; } .br b { font-weight: normal; } .br i { color: #3f8ad0; font-size: 10px; }
.grid { display: flex; height: 784px; border-top: 1px solid #b4afaa; border-left: 1px solid #b4afaa; }
.gridmain { width: 748px; display: flex; flex-direction: column; }
.ghead, .row { display: grid; grid-template-columns: 29px 99px 52px 84px 43px 42px 65px 175px 76px 81px 2px; flex: none; }
.ghead { height: 18px; border-bottom: 1px solid #b4afaa; background: linear-gradient(#faf7f4, #eae6e2); text-align: center; line-height: 17px; } .ghead span { border-right: 1px solid #cbc7c3; } .ghead span:first-child { border-right: 0; } .ghead span:last-child { border: 0; }
.rows { flex: 1; overflow: hidden; }
.row { height: 30px; background: #fff; line-height: 28px; } .row:nth-child(even) { background: #f5f4f2; }
.row span { border-right: 1px solid #c0bebc; border-bottom: 1px solid #c0bebc; padding-left: 4px; white-space: nowrap; overflow: hidden; }
.row span:first-child { background: linear-gradient(#faf7f4, #e9e5e1); border-color: #b0aba6; padding-left: 2px; line-height: 30px; } .row span:last-child { border-right: 0; padding: 0; }
.coords { display: flex; } .coords b { width: 58px; font-weight: normal; flex: none; }
.h2 .thumb { width: 251px; }
.v2 { width: 15px; border-right: 1px solid #b4afaa; } .v2 .thumb { height: 31px; background: linear-gradient(90deg, #fff, #efecea); border-bottom: 1px solid #b4afaa; } .corner { height: 15px; border-top: 1px solid #b4afaa; }
.h2 { border-bottom: 1px solid #b4afaa; }
.status { flex: 1; display: flex; align-items: flex-start; padding: 4px 0 0 963px; gap: 5px; } .status svg { width: 15px; height: 15px; margin-top: 2px; } .prog { flex: 1; height: 20px; border-top: 1px solid #a8a39e; border-left: 1px solid #a8a39e; border-bottom: 1px solid #fff; }
```
FILE: app.js
```js
// Time series shown in the spreadsheet: KS, MULR, PHI, PVI, QL1, QL2
const series = `1.96496e-12 0.001 0.195 0.465594 3.22403e-6 -8.94293e-6
1.96496e-12 0.001 0.195 0.961402 6.70508e-6 -1.85948e-5
1.96496e-12 0.001 0.195 1.45721 1.01861e-5 -2.82466e-5
1.96496e-12 0.001 0.195 1.95302 1.36672e-5 -3.78984e-5
1.96496e-12 0.001 0.195 2.44883 1.71483e-5 -4.75502e-5
1.96496e-12 0.001 0.195 2.94463 2.06293e-5 -5.72021e-5
1.96496e-12 0.001 0.195 3.44044 2.41104e-5 -6.68539e-5
1.96496e-12 0.001 0.195 3.93625 2.75914e-5 -7.65057e-5
1.96496e-12 0.001 0.195 4.43206 3.10725e-5 -8.61575e-5
1.96496e-12 0.001 0.195 4.92787 3.45535e-5 -9.58094e-5
1.96496e-12 0.001 0.195 5.42367 2.71656e-5 -6.18183e-5
1.96496e-12 0.001 0.195 5.91948 2.21212e-5 -4.97246e-5
1.96491e-12 0.0... 0.195 6.41529 2.02461e-5 -4.44152e-5
1.9646e-12 0.0... 0.195 6.9111 1.89895e-5 -4.15009e-5
1.96277e-12 0.0... 0.195 7.40691 1.74386e-5 -3.89971e-5
1.94995e-12 0.0... 0.1... 7.90271 1.64819e-5 -3.67738e-5
1.87963e-12 0.0... 0.1... 8.39852 1.49511e-5 -3.44029e-5
1.82518e-12 0.0... 0.1... 8.89433 1.21675e-5 -3.17372e-5
1.8001e-12 0.0... 0.1... 9.39014 1.08107e-5 -3.01745e-5
1.78093e-12 0.0... 0.1... 9.88595 1.06076e-5 -2.92322e-5
1.7676e-12 0.0... 0.1... 10.3818 1.08016e-5 -2.85202e-5
1.75953e-12 0.0... 0.1... 10.8776 1.10251e-5 -2.79273e-5
1.75516e-12 0.0... 0.1... 11.3734 1.12009e-5 -2.74464e-5
1.75301e-12 0.0... 0.1... 11.8692 1.13168e-5 -2.70641e-5
1.75213e-12 0.0... 0.1... 12.365 1.13718e-5 -2.67511e-5`.split('\n');
document.getElementById('rows').innerHTML = series.map((line, i) => {
  const [ks, mulr, phi, pvi, ql1, ql2] = line.split(' ');
  const cells = [i, 1, i, ks, mulr, phi, pvi].map(c => `<span>${c}</span>`).join('');
  return `<div class="row">${cells}<span class="coords"><b>0.5</b><b>0.5</b><b>0</b></span><span>${ql1}</span><span>${ql2}</span><span></span></div>`;
}).join('') + '<div class="row"></div>';

// Cell edges of one quadrant of the domain, in thirds of a pixel, around four wells
const edges = `58,19 55,54 56,85 66,122 89,160
93,19 89,52 82,80 102,97 132,124 166,154
131,19 124,65 102,97 66,122 19,130
19,57 55,54 89,52 124,65 166,82 211,72 251,68 291,68 330,71 369,77 397,54 428,63 468,72 502,52 532,60 566,63 605,61 643,60 680,67 706,85 753,73 788,68 822,68 868,72 912,83 958,66 993,57 1024,55 1061,55
19,92 56,85 82,80
169,19 166,82 132,124 89,160 142,180
166,82 195,133
19,165 89,160
208,19 215,72 227,118
243,19 251,68 262,111
280,19 291,68 298,111
317,19 330,71 333,118
354,19 369,77 367,130
392,19 397,54
428,19 428,63 407,103 394,154
466,19 468,72 443,133 418,180
369,77 407,103 443,133 475,165 504,211
502,19 502,52
468,72 507,103 556,120 585,167 615,188 645,211
540,19 532,60 507,103 475,165 435,211
578,19 566,63 556,120 504,211 500,272 490,320 482,363 454,400 427,442 432,487 435,521 438,547
613,19 605,61 605,94 617,131 640,153 662,180
652,19 643,60 629,88 605,94 556,120
688,19 680,67 652,103 617,131 585,167 558,221 547,276 547,337
723,19 706,85 672,127 640,153 615,188 598,237 592,277 597,322 617,363
629,88 652,103 672,127 686,154
706,85 715,133
760,19 753,73 747,118
800,19 788,68 782,111
835,19 822,68 818,111
873,19 868,72 853,118
912,19 912,83 885,133
504,211 558,221 598,237 634,245
446,245 504,211
450,280 500,272 547,276 592,277 630,280
446,315 490,320 547,337 597,322 634,315
435,349 482,363 515,380 551,411 583,440 608,465 638,497
418,380 454,400 494,418 528,440 555,465 580,497
394,406 427,442
547,337 515,380 494,418 466,455 478,494 468,530 460,562 440,582
547,337 580,373 609,416 635,440 663,473 690,507
580,373 551,411 528,440 510,469 502,508 498,540 498,578 472,601
645,349 617,363 580,373
617,363 635,390 658,415 692,444 732,480
662,380 609,416 583,440 555,465 535,482
686,406 635,440 608,465 578,501
715,427 692,444 663,473 638,497 617,522
638,497 642,530
427,442 466,455 510,469 535,482 578,501 617,522 642,530 690,507 732,480 747,442
432,487 478,494 502,508 540,507 574,512
435,521 468,530 498,540 540,545 574,547 612,555 643,553 675,548 711,537 747,523 785,520 821,521
535,597 577,588 613,590 648,592 690,588 720,572 747,560 784,550 813,573
535,482 540,507 540,545 535,597
578,501 574,547 577,588 580,615 610,626
617,522 612,555 613,590 610,626 602,665 594,712 590,758 592,803 594,847 611,885
642,530 643,553 648,592 654,637
365,653 388,633 416,603 440,582
394,674 415,657 444,630 472,601
418,700 448,685 477,660 503,630 535,597
435,731 480,715 509,700 535,663 580,615
446,765 488,755 538,741 563,695 602,665
450,800 490,800 538,803 592,803 630,800
538,741 538,803 539,864
412,562 440,582 472,601 503,630 535,663 563,695 594,712 645,731
383,580 416,603 444,630 477,660 509,700 538,741 590,758 634,765
350,598 388,633 415,657 448,685 480,715 488,755 490,800 487,848 475,887 445,930 411,980
438,547 460,562 498,578 535,597 580,615 602,665 630,685 662,700
610,626 654,637 694,619 734,602 775,590 813,573 873,561 910,573
654,637 630,685
654,637 686,674
365,427 384,455 395,497 405,530 438,547 412,562 383,580 350,598 333,638
333,442 345,470 363,505 375,538 412,562
298,449 312,485 337,513 352,550 383,580
262,449 267,507
296,525 299,557 300,595 298,631
227,442 209,518 217,565 227,600 227,638
259,555 260,595 262,631
267,507 259,555
427,442 384,455 345,470 312,485 267,507 209,518
432,487 395,497 363,505 337,513 296,525 267,507
435,521 405,530 375,538 340,547 299,557 259,555 217,565 155,572 120,587 80,598 19,612
350,598 300,595 260,595 227,600 165,605 130,625 85,636 19,650
19,205 77,203 125,211
19,241 70,241 114,245
19,280 110,280
19,316 72,316 114,315
19,352 75,352 125,349
19,390 86,395 142,380
89,160 77,203 70,241 67,280 72,316 75,352 86,395 61,432 54,464 59,500 66,530 74,570 85,636 95,677 77,722 70,760 67,800 70,836 80,884
19,427 61,432 96,444 127,425 166,406
86,395 127,425 150,448 165,472 172,505 209,518
19,464 54,464 83,464 96,444
83,464 89,490 98,520 106,553 120,587 130,625 145,650 166,674
114,467 150,448 195,427
19,503 59,500 89,490 127,490 165,472 227,442
19,540 66,530 98,520 135,508 172,505
19,575 74,570 106,553 145,538 209,518
19,688 95,677 145,650 195,653
96,444 114,467 127,490 135,508 145,538 155,572 165,605 195,653
95,677 142,700
19,724 77,722 125,731
19,760 70,760 114,765
19,800 110,800
19,838 70,836 114,835
19,876 80,884 142,900
80,884 125,869
19,910 62,925 90,945 112,920 142,900
80,884 112,920 141,953 169,993 195,947
80,884 62,925 52,958 53,988 57,1021 58,1061
19,948 52,958 76,962 90,945 117,970
76,962 83,990 91,1020 93,1061
117,970 124,1007 131,1061
166,926 141,953 117,970 83,990 53,988 19,988
19,1021 57,1021 91,1020 124,1007 169,993 212,1003 250,1011 289,1012 330,1010 369,1000 411,980 450,1000 511,1033 540,1030
169,993 169,1061
227,962 212,1003 208,1061
262,969 250,1011 243,1061
298,969 289,1012 280,1061
333,962 330,1010 317,1061
365,947 369,1000 354,1061
394,926 411,980 392,1061
446,835 487,848 539,864 594,847 634,835
435,869 475,887 505,915 537,945 573,980
418,900 445,930 505,973 550,1008
539,864 505,915 477,951 450,1000 428,1061
539,864 571,914 605,957 640,990 667,1015
571,914 537,945 505,973 480,1016 466,1061
645,869 611,885 571,914
611,885 640,930 677,960 706,993
662,900 640,930 605,957 573,980 550,1008 540,1030 541,1061
686,926 677,960 630,998
605,957 604,1000 613,1028 613,1061
550,1008 577,1002 604,1000 630,998 640,1028 652,1061
577,1002 577,1061
540,1030 577,1031 613,1028 640,1028 667,1015 706,993 747,1005 790,1012 826,1012 868,1008 914,995 955,1013 993,1025 1024,1023 1061,1023
667,1015 688,1061
715,947 706,993 723,1061
747,962 747,1005 760,1061
782,969 790,1012 800,1061
818,969 826,1012 835,1061
853,962 868,1008 873,1061
885,947 914,995 912,1061
511,1033 502,1061
912,83 948,123 978,159 1003,192 1061,205
948,123 914,154
938,180 978,159 989,130 1006,118 1028,124 1061,130
955,211 1003,192
950,19 958,66 974,103 989,130
988,19 993,57 1001,90 1006,118
948,123 974,103 1001,90 1028,90 1061,92
1024,19 1024,55 1028,90 1028,124 1020,155 1003,192 1008,240 1012,280 1010,316 1004,355 987,402 998,440 1008,478 1017,515 1023,550 1028,590 1027,615 1018,645 997,683 1008,722 1012,762 1013,800 1013,836 1006,875 994,920 1014,960 1025,990 1024,1023 1024,1061
1061,166 1020,155
966,245 1008,240 1061,241
970,280 1061,280
966,315 1010,316 1061,316
955,349 1004,355 1061,352
938,380 987,402 1061,390
1061,427 998,440 957,455 907,470 853,485 821,484 783,484 732,480
1061,464 1008,478 970,490 925,508 863,522 821,521
1061,502 1017,515 980,525 935,543 873,561
1061,540 1023,550 985,562 945,577 914,600 855,635
1061,575 1028,590 993,593 955,612 932,630 885,653
1061,610 1027,615 1002,613 993,593
1002,613 975,642 932,630 914,600 910,573 935,543
1061,650 1018,645 975,642 914,674
1061,685 997,683 938,700
885,427 907,470 925,508 935,543 945,577 955,612 975,642
914,406 945,430 957,455 970,490 980,525 985,562 993,593
987,402 945,430
853,442 853,485 863,522 873,561 855,635
818,449 821,484 821,521 813,573 818,631
782,449 783,484 785,520 784,550
732,480 747,523 747,560 775,590 782,631
690,507 711,537 720,572 734,602 747,638
642,530 675,548 690,588 694,619 715,653
955,731 1008,722 1061,724
966,765 1012,762 1061,762
970,800 1061,800
966,835 1013,836 1061,836
955,869 1006,875 1061,875
938,900 994,920 1061,910
914,926 950,955 994,920
1061,948 1014,960 983,982 950,955 914,995
983,982 1000,997 1025,990 1061,988
983,982 955,1013 950,1061
1000,997 993,1025 988,1061`.split('\n').map(l => l.trim().split(' '));

const wells = [[280, 280], [800, 280], [280, 800], [800, 800]];
const lines = edges.map(p => 'M' + p.join('L'));
const nodes = new Set(edges.flat());
let discs = '';
for (const [cx, cy] of wells) {
  const at = (r, k) => {
    const a = k * Math.PI / 15;
    return `${Math.round(cx + r * Math.cos(a))},${Math.round(cy + r * Math.sin(a))}`;
  };
  for (const r of [113, 139, 170]) {
    const ring = Array.from({ length: 30 }, (_, k) => at(r, k));
    ring.forEach(n => nodes.add(n));
    lines.push('M' + ring.join('L') + 'Z');
    if (r === 113) discs += `<path d="M${ring.join('L')}Z" fill="#52576e" stroke="#000084" stroke-width="4"/>`;
  }
  for (let k = 0; k < 30; k++) lines.push(`M${at(113, k)}L${at(139, k)}L${at(170, k)}`);
}
const dots = [...nodes].map(n => { const [x, y] = n.split(','); return `<circle cx="${x}" cy="${y}" r="3.2"/>`; }).join('');
const quadrant = `<g id="quadrant"><path class="mesh-line" d="${lines.join('')}"/><g class="mesh-node">${dots}</g>${discs}</g>`;
const place = (x, y) => `translate(${405.2 + x * 347} ${266 + y * 346.6}) scale(.3333)`;
const picked = [[934.5, 358.5], [758.5, 432.5], [929.5, 464.5], [585.5, 619.5], [758.5, 619.5], [944.5, 619.5]];
document.getElementById('mesh').innerHTML =
  `<rect x="411.5" y="272.5" width="694" height="693" fill="#c8c5bc"/>` +
  `<g transform="${place(0, 0)}">${quadrant}</g>` +
  [[1, 0], [0, 1], [1, 1]].map(([x, y]) => `<use href="#quadrant" transform="${place(x, y)}"/>`).join('') +
  `<path class="mesh-edge" d="M411.500 272.500h694v693h-694zM758.500 272.500v693M411.500 619.500h694"/>` +
  picked.map(([x, y]) => `<circle cx="${x}" cy="${y}" r="2.700" fill="#ff00ff"/>`).join('') +
  `<rect x="980" y="414" width="5" height="5" fill="#7f00ff"/>`;
```
